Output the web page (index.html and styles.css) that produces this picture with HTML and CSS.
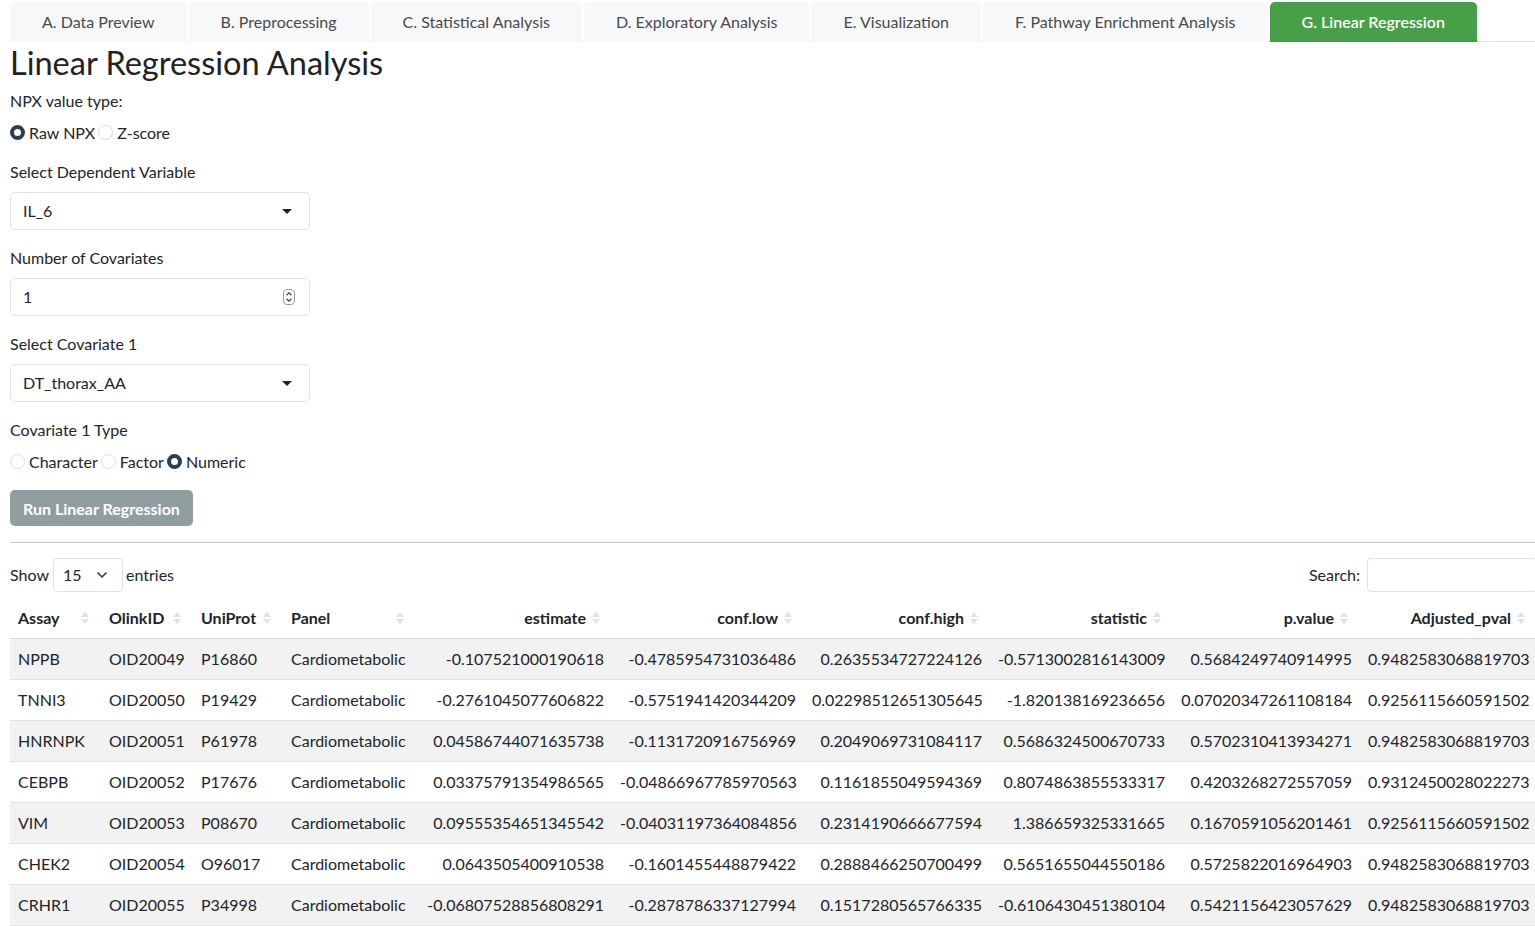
FILE: index.html
```html
<!DOCTYPE html>
<html lang="en">
<head>
    <meta charset="UTF-8">
    <meta name="viewport" content="width=device-width, initial-scale=1.0">
    <title>Linear Regression Analysis</title>
    <link rel="stylesheet" href="styles.css">
</head>
<body>
<div class="page">

    <!-- Tabs -->
    <ul class="nav-tabs">
        <li class="tab">A. Data Preview</li>
        <li class="tab">B. Preprocessing</li>
        <li class="tab">C. Statistical Analysis</li>
        <li class="tab">D. Exploratory Analysis</li>
        <li class="tab">E. Visualization</li>
        <li class="tab">F. Pathway Enrichment Analysis</li>
        <li class="tab active">G. Linear Regression</li>
    </ul>

    <h2 class="title">Linear Regression Analysis</h2>

    <!-- Inputs -->
    <div class="form-group">
        <label class="control-label">NPX value type:</label>
        <div class="radios">
            <span class="radio"><span class="dot checked"></span>Raw NPX</span>
            <span class="radio"><span class="dot"></span>Z-score</span>
        </div>
    </div>

    <div class="form-group">
        <label class="control-label">Select Dependent Variable</label>
        <div class="select-box">
            <span>IL_6</span>
            <span class="caret"></span>
        </div>
    </div>

    <div class="form-group">
        <label class="control-label">Number of Covariates</label>
        <div class="select-box">
            <span>1</span>
            <svg class="spinner" width="12" height="16" viewBox="0 0 12 16">
                <rect x="0.5" y="0.5" width="11" height="15" rx="3.5" fill="#fff" stroke="#9a9a9a"/>
                <path d="M3.5 6.3 L6 3.8 L8.5 6.3" fill="none" stroke="#444" stroke-width="1.3"/>
                <path d="M3.5 9.7 L6 12.2 L8.5 9.7" fill="none" stroke="#444" stroke-width="1.3"/>
            </svg>
        </div>
    </div>

    <div class="form-group">
        <label class="control-label">Select Covariate 1</label>
        <div class="select-box">
            <span>DT_thorax_AA</span>
            <span class="caret"></span>
        </div>
    </div>

    <div class="form-group">
        <label class="control-label">Covariate 1 Type</label>
        <div class="radios">
            <span class="radio"><span class="dot"></span>Character</span>
            <span class="radio"><span class="dot"></span>Factor</span>
            <span class="radio"><span class="dot checked"></span>Numeric</span>
        </div>
    </div>

    <button class="btn-run">Run Linear Regression</button>

    <hr class="divider">

    <!-- Results table -->
    <div class="dt-wrapper">
        <div class="dt-top">
            <div class="dt-length">
                Show
                <div class="length-select">
                    <span>15</span>
                    <svg width="12" height="8" viewBox="0 0 12 8"><path d="M1.5 1.5 L6 6 L10.5 1.5" fill="none" stroke="#333" stroke-width="1.5"/></svg>
                </div>
                entries
            </div>
            <div class="dt-search">
                Search:
                <div class="search-input"></div>
            </div>
        </div>

        <table class="dt">
            <colgroup>
                <col class="w-assay"><col class="w-olink"><col class="w-uniprot"><col class="w-panel">
                <col class="w-est"><col class="w-low"><col class="w-high"><col class="w-stat">
                <col class="w-p"><col class="w-adj">
            </colgroup>
            <thead>
                <tr>
                    <th><div class="th-in"><span>Assay</span><span class="sort"></span></div></th>
                    <th><div class="th-in"><span>OlinkID</span><span class="sort"></span></div></th>
                    <th><div class="th-in"><span>UniProt</span><span class="sort"></span></div></th>
                    <th><div class="th-in"><span>Panel</span><span class="sort"></span></div></th>
                    <th class="num"><div class="th-in"><span>estimate</span><span class="sort"></span></div></th>
                    <th class="num"><div class="th-in"><span>conf.low</span><span class="sort"></span></div></th>
                    <th class="num"><div class="th-in"><span>conf.high</span><span class="sort"></span></div></th>
                    <th class="num"><div class="th-in"><span>statistic</span><span class="sort"></span></div></th>
                    <th class="num"><div class="th-in"><span>p.value</span><span class="sort"></span></div></th>
                    <th class="num"><div class="th-in"><span>Adjusted_pval</span><span class="sort"></span></div></th>
                </tr>
            </thead>
            <tbody>
                <tr>
                    <td>NPPB</td><td>OID20049</td><td>P16860</td><td>Cardiometabolic</td>
                    <td class="num">-0.107521000190618</td><td class="num">-0.4785954731036486</td>
                    <td class="num">0.2635534727224126</td><td class="num">-0.5713002816143009</td>
                    <td class="num">0.5684249740914995</td><td class="num">0.9482583068819703</td>
                </tr>
                <tr>
                    <td>TNNI3</td><td>OID20050</td><td>P19429</td><td>Cardiometabolic</td>
                    <td class="num">-0.2761045077606822</td><td class="num">-0.5751941420344209</td>
                    <td class="num">0.02298512651305645</td><td class="num">-1.820138169236656</td>
                    <td class="num">0.07020347261108184</td><td class="num">0.9256115660591502</td>
                </tr>
                <tr>
                    <td>HNRNPK</td><td>OID20051</td><td>P61978</td><td>Cardiometabolic</td>
                    <td class="num">0.04586744071635738</td><td class="num">-0.1131720916756969</td>
                    <td class="num">0.2049069731084117</td><td class="num">0.5686324500670733</td>
                    <td class="num">0.5702310413934271</td><td class="num">0.9482583068819703</td>
                </tr>
                <tr>
                    <td>CEBPB</td><td>OID20052</td><td>P17676</td><td>Cardiometabolic</td>
                    <td class="num">0.03375791354986565</td><td class="num">-0.04866967785970563</td>
                    <td class="num">0.1161855049594369</td><td class="num">0.8074863855533317</td>
                    <td class="num">0.4203268272557059</td><td class="num">0.9312450028022273</td>
                </tr>
                <tr>
                    <td>VIM</td><td>OID20053</td><td>P08670</td><td>Cardiometabolic</td>
                    <td class="num">0.09555354651345542</td><td class="num">-0.04031197364084856</td>
                    <td class="num">0.2314190666677594</td><td class="num">1.386659325331665</td>
                    <td class="num">0.1670591056201461</td><td class="num">0.9256115660591502</td>
                </tr>
                <tr>
                    <td>CHEK2</td><td>OID20054</td><td>O96017</td><td>Cardiometabolic</td>
                    <td class="num">0.0643505400910538</td><td class="num">-0.1601455448879422</td>
                    <td class="num">0.2888466250700499</td><td class="num">0.5651655044550186</td>
                    <td class="num">0.5725822016964903</td><td class="num">0.9482583068819703</td>
                </tr>
                <tr>
                    <td>CRHR1</td><td>OID20055</td><td>P34998</td><td>Cardiometabolic</td>
                    <td class="num">-0.06807528856808291</td><td class="num">-0.2878786337127994</td>
                    <td class="num">0.1517280565766335</td><td class="num">-0.6106430451380104</td>
                    <td class="num">0.5421156423057629</td><td class="num">0.9482583068819703</td>
                </tr>
            </tbody>
        </table>
    </div>

</div>
</body>
</html>
```

FILE: styles.css
```css
/* Reset */
* {
    margin: 0;
    padding: 0;
    box-sizing: border-box;
}

html, body {
    overflow: hidden;
}

body {
    font-family: Lato, "Open Sans", sans-serif;
    font-size: 16px;
    line-height: 22px;
    color: #212529;
    background-color: #fff;
}

.page {
    padding: 0 10px;
    width: 1560px;
}

/* Tabs */
.nav-tabs {
    list-style: none;
    display: flex;
    width: 1525px;
    padding-top: 2px;
    border-bottom: 1px solid #dee2e6;
}

.tab {
    height: 40px;
    margin-bottom: -1px;
    margin-right: 2px;
    padding: 0 32px;
    display: flex;
    align-items: center;
    background-color: #f7f8f9;
    color: #4a4a4a;
    border-radius: 5px 5px 0 0;
}

.tab.active {
    background-color: #47a047;
    color: #fff;
    font-weight: 600;
}

.title {
    font-size: 32.5px;
    font-weight: 400;
    line-height: 38px;
    margin: 2px 0 8px;
    color: #222;
}

/* Form controls */
.form-group {
    margin-bottom: 17px;
}

.control-label {
    display: block;
    margin-bottom: 9px;
}

.radios {
    display: flex;
    align-items: center;
    min-height: 23px;
}

.radio {
    display: flex;
    align-items: center;
    margin-right: 3px;
}

.dot {
    width: 15px;
    height: 15px;
    border-radius: 50%;
    border: 1px solid #dcdcdc;
    background: #fff;
    margin-right: 4px;
}

.dot.checked {
    border: 4.5px solid #2c3e50;
}

.select-box {
    width: 300px;
    height: 38px;
    border: 1px solid #dee2e6;
    border-radius: 5px;
    padding: 0 12px 0 12px;
    display: flex;
    align-items: center;
    justify-content: space-between;
}

.caret {
    width: 0;
    height: 0;
    border-left: 5px solid transparent;
    border-right: 5px solid transparent;
    border-top: 5px solid #222;
    margin-right: 5px;
}

.spinner {
    margin-right: 2px;
}

.btn-run {
    font-family: inherit;
    font-size: 16px;
    font-weight: 700;
    color: #fff;
    background-color: #909e9f;
    border: none;
    border-radius: 5px;
    height: 36px;
    padding: 0 13px;
}

.divider {
    border: none;
    border-top: 1px solid #c8c8c8;
    margin: 16px 0 15px;
    width: 1525px;
}

/* DataTable */
.dt-wrapper {
    width: 1527px;
}

.dt-top {
    display: flex;
    justify-content: space-between;
    align-items: center;
    margin-bottom: 6px;
}

.dt-length,
.dt-search {
    display: flex;
    align-items: center;
}

.length-select {
    width: 70px;
    height: 34px;
    margin: 0 3px 0 4px;
    border: 1px solid #dee2e6;
    border-radius: 4px;
    padding: 0 14px 0 9px;
    display: flex;
    align-items: center;
    justify-content: space-between;
}

.search-input {
    width: 170px;
    height: 34px;
    margin-left: 7px;
    border: 1px solid #dee2e6;
    border-radius: 4px;
}

.dt {
    border-collapse: collapse;
    table-layout: fixed;
    width: 1527px;
}

.w-assay { width: 91px; }
.w-olink { width: 92px; }
.w-uniprot { width: 90px; }
.w-panel { width: 133px; }
.w-est { width: 196px; }
.w-low { width: 192px; }
.w-high { width: 186px; }
.w-stat { width: 183px; }
.w-p { width: 187px; }
.w-adj { width: 177px; }

.dt th {
    font-weight: 700;
    text-align: left;
    padding: 9px 12px 9px 8px;
    border-bottom: 1px solid #d6d8db;
}

.th-in {
    display: flex;
    align-items: center;
    justify-content: space-between;
}

.dt th.num .th-in {
    justify-content: flex-end;
    gap: 6px;
}

/* sort arrows */
.sort {
    width: 8px;
    height: 14px;
    position: relative;
    flex-shrink: 0;
}

.sort::before,
.sort::after {
    content: "";
    position: absolute;
    left: 0;
    border-left: 4px solid transparent;
    border-right: 4px solid transparent;
}

.sort::before {
    top: 1px;
    border-bottom: 5px solid #e2e2e2;
}

.sort::after {
    bottom: 1px;
    border-top: 5px solid #e2e2e2;
}

.dt td {
    padding: 9px 8px 9px 8px;
    border-bottom: 1px solid #dee2e6;
    white-space: nowrap;
}

.dt .num {
    text-align: right;
}

.dt tbody tr:nth-child(odd) {
    background-color: #f2f2f2;
}
```
